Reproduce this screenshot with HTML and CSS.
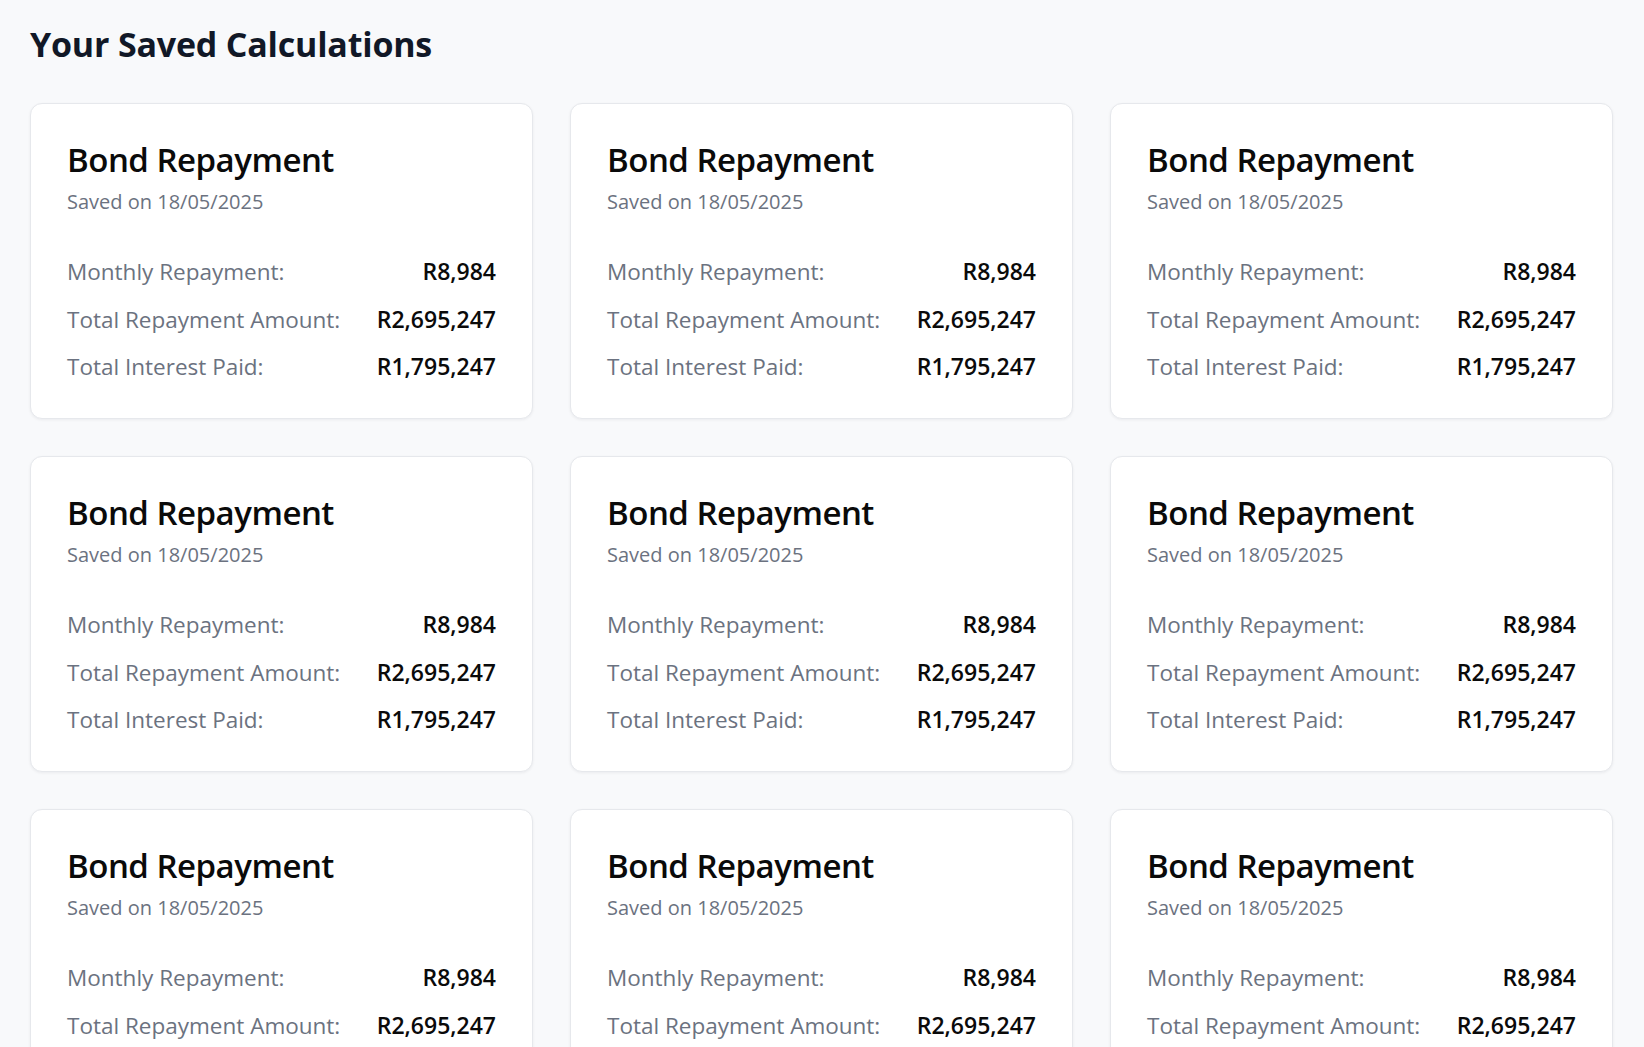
FILE: index.html
```html
<!DOCTYPE html>
<html lang="en">
<head>
<meta charset="utf-8">
<title>Your Saved Calculations</title>
<link rel="stylesheet" href="styles.css">
</head>
<body>
<main class="page">
  <h1 class="page-title">Your Saved Calculations</h1>
  <section class="grid">
    <article class="card">
      <h2 class="card-title">Bond Repayment</h2>
      <p class="card-date">Saved on 18/05/2025</p>
      <dl class="stats">
        <div class="stat"><dt>Monthly Repayment:</dt><dd>R8,984</dd></div>
        <div class="stat"><dt>Total Repayment Amount:</dt><dd>R2,695,247</dd></div>
        <div class="stat"><dt>Total Interest Paid:</dt><dd>R1,795,247</dd></div>
      </dl>
    </article>
    <article class="card">
      <h2 class="card-title">Bond Repayment</h2>
      <p class="card-date">Saved on 18/05/2025</p>
      <dl class="stats">
        <div class="stat"><dt>Monthly Repayment:</dt><dd>R8,984</dd></div>
        <div class="stat"><dt>Total Repayment Amount:</dt><dd>R2,695,247</dd></div>
        <div class="stat"><dt>Total Interest Paid:</dt><dd>R1,795,247</dd></div>
      </dl>
    </article>
    <article class="card">
      <h2 class="card-title">Bond Repayment</h2>
      <p class="card-date">Saved on 18/05/2025</p>
      <dl class="stats">
        <div class="stat"><dt>Monthly Repayment:</dt><dd>R8,984</dd></div>
        <div class="stat"><dt>Total Repayment Amount:</dt><dd>R2,695,247</dd></div>
        <div class="stat"><dt>Total Interest Paid:</dt><dd>R1,795,247</dd></div>
      </dl>
    </article>
    <article class="card">
      <h2 class="card-title">Bond Repayment</h2>
      <p class="card-date">Saved on 18/05/2025</p>
      <dl class="stats">
        <div class="stat"><dt>Monthly Repayment:</dt><dd>R8,984</dd></div>
        <div class="stat"><dt>Total Repayment Amount:</dt><dd>R2,695,247</dd></div>
        <div class="stat"><dt>Total Interest Paid:</dt><dd>R1,795,247</dd></div>
      </dl>
    </article>
    <article class="card">
      <h2 class="card-title">Bond Repayment</h2>
      <p class="card-date">Saved on 18/05/2025</p>
      <dl class="stats">
        <div class="stat"><dt>Monthly Repayment:</dt><dd>R8,984</dd></div>
        <div class="stat"><dt>Total Repayment Amount:</dt><dd>R2,695,247</dd></div>
        <div class="stat"><dt>Total Interest Paid:</dt><dd>R1,795,247</dd></div>
      </dl>
    </article>
    <article class="card">
      <h2 class="card-title">Bond Repayment</h2>
      <p class="card-date">Saved on 18/05/2025</p>
      <dl class="stats">
        <div class="stat"><dt>Monthly Repayment:</dt><dd>R8,984</dd></div>
        <div class="stat"><dt>Total Repayment Amount:</dt><dd>R2,695,247</dd></div>
        <div class="stat"><dt>Total Interest Paid:</dt><dd>R1,795,247</dd></div>
      </dl>
    </article>
    <article class="card">
      <h2 class="card-title">Bond Repayment</h2>
      <p class="card-date">Saved on 18/05/2025</p>
      <dl class="stats">
        <div class="stat"><dt>Monthly Repayment:</dt><dd>R8,984</dd></div>
        <div class="stat"><dt>Total Repayment Amount:</dt><dd>R2,695,247</dd></div>
        <div class="stat"><dt>Total Interest Paid:</dt><dd>R1,795,247</dd></div>
      </dl>
    </article>
    <article class="card">
      <h2 class="card-title">Bond Repayment</h2>
      <p class="card-date">Saved on 18/05/2025</p>
      <dl class="stats">
        <div class="stat"><dt>Monthly Repayment:</dt><dd>R8,984</dd></div>
        <div class="stat"><dt>Total Repayment Amount:</dt><dd>R2,695,247</dd></div>
        <div class="stat"><dt>Total Interest Paid:</dt><dd>R1,795,247</dd></div>
      </dl>
    </article>
    <article class="card">
      <h2 class="card-title">Bond Repayment</h2>
      <p class="card-date">Saved on 18/05/2025</p>
      <dl class="stats">
        <div class="stat"><dt>Monthly Repayment:</dt><dd>R8,984</dd></div>
        <div class="stat"><dt>Total Repayment Amount:</dt><dd>R2,695,247</dd></div>
        <div class="stat"><dt>Total Interest Paid:</dt><dd>R1,795,247</dd></div>
      </dl>
    </article>
  </section>
</main>
</body>
</html>
```

FILE: styles.css
```css
* {
  box-sizing: border-box;
}

html, body {
  margin: 0;
  padding: 0;
  background: #f8f9fb;
}

body {
  font-family: "Open Sans", "Noto Sans", "Liberation Sans", sans-serif;
  color: #111827;
}

.page {
  padding: 21px 31px 40px 30px;
}

.page-title {
  margin: 0 0 36px 0;
  font-size: 34px;
  line-height: 46px;
  font-weight: 700;
  color: #111827;
  letter-spacing: -0.2px;
}

.grid {
  display: grid;
  grid-template-columns: repeat(3, 1fr);
  gap: 37px;
}

.card {
  background: #ffffff;
  border: 1px solid #e6e8ec;
  border-radius: 12px;
  box-shadow: 0 1px 3px rgba(16, 24, 40, 0.06);
  padding: 34px 36px 36px 36px;
  height: 316px;
}

.card-title {
  margin: 0;
  font-size: 33px;
  line-height: 44px;
  font-weight: 600;
  color: #0a0a0a;
  letter-spacing: -0.5px;
}

.card-date {
  margin: 6px 0 0 0;
  font-size: 20px;
  line-height: 28px;
  color: #6b7280;
}

.stats {
  margin: 40px 0 0 0;
  display: flex;
  flex-direction: column;
  gap: 16.5px;
}

.stat {
  display: flex;
  justify-content: space-between;
  align-items: baseline;
  font-size: 22.5px;
  line-height: 31px;
}

.stat dt {
  color: #6b7280;
}

.stat dd {
  margin: 0;
  font-size: 23px;
  font-weight: 600;
  color: #0a0a0a;
}
```
